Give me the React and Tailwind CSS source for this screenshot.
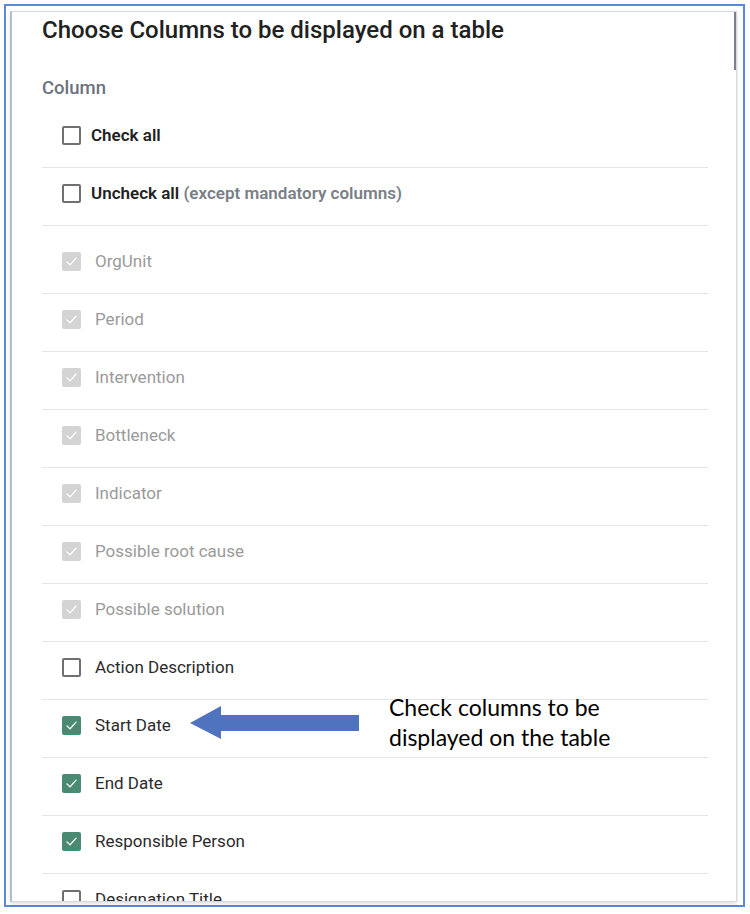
import React from 'react';

const columns = [
  { label: 'OrgUnit', state: 'locked' },
  { label: 'Period', state: 'locked' },
  { label: 'Intervention', state: 'locked' },
  { label: 'Bottleneck', state: 'locked' },
  { label: 'Indicator', state: 'locked' },
  { label: 'Possible root cause', state: 'locked' },
  { label: 'Possible solution', state: 'locked' },
  { label: 'Action Description', state: 'off' },
  { label: 'Start Date', state: 'on', note: true },
  { label: 'End Date', state: 'on' },
  { label: 'Responsible Person', state: 'on' },
  { label: 'Designation Title', state: 'off' },
];

const Tick = () => (
  <svg viewBox="0 0 20 20" className="w-[15px] h-[15px]" fill="none">
    <path d="M4 10.5l4 4 8-9" stroke="white" strokeWidth="1.8" strokeLinecap="round" strokeLinejoin="round" />
  </svg>
);

const Box = ({ state }) => {
  if (state === 'off') {
    return <span className="w-[19px] h-[19px] shrink-0 rounded-[2px] border-2 border-[#707070] bg-white" />;
  }
  return (
    <span
      className={`w-[19px] h-[19px] shrink-0 rounded-[2px] flex items-center justify-center ${
        state === 'on' ? 'bg-[#4a8a73]' : 'bg-[#d4d4d4]'
      }`}
    >
      <Tick />
    </span>
  );
};

// annotation laid over the list
const Callout = () => (
  <div className="absolute left-[147px] top-[-8px] flex items-start pointer-events-none">
    <svg width="170" height="40" viewBox="0 0 170 40" className="mt-[13px]">
      <polygon points="1,18 32,1 32,10 170,10 170,26 32,26 32,34" fill="#4f73bf" />
    </svg>
    <div
      className="ml-[30px] text-[23px] leading-[30px] text-black"
      style={{ fontFamily: 'Lato, "Open Sans", sans-serif' }}
    >
      <div>Check columns to be</div>
      <div>displayed on the table</div>
    </div>
  </div>
);

export default function App() {
  return (
    <div className="w-[750px] h-[914px] bg-white pt-[4px] pl-[4px]" style={{ fontFamily: 'Roboto, "Liberation Sans", sans-serif' }}>
      <div className="w-[741px] h-[903px] border-2 border-[#5b87de] pt-[5px] pl-[4px] pr-[6px] pb-[3px]">
        <div className="relative h-full overflow-hidden bg-white border border-[#d3d9e4] border-l-2 border-l-[#b6bdca] shadow-[0_2px_4px_rgba(0,0,0,0.12)]">
          <div className="absolute right-0 top-0 w-[2px] h-[58px] bg-[#7b8190]" />
          <div className="pl-[30px] pt-[4px] pr-[28px]">
            <h1 className="text-[24px] leading-[28px] font-medium text-[#212121]">
              Choose Columns to be displayed on a table
            </h1>
            <div className="mt-[32px] text-[18.5px] leading-[24px] font-medium text-[#6c727d]">Column</div>

            <div className="mt-[10px]">
              <div className="h-[58px] flex items-center gap-[10px] pl-[20px] pb-[6px] border-b border-[#e4e4e4]">
                <Box state="off" />
                <span className="text-[17px] font-semibold text-[#222]">Check all</span>
              </div>
              <div className="h-[58px] flex items-center gap-[10px] pl-[20px] pb-[6px] border-b border-[#e4e4e4]">
                <Box state="off" />
                <span className="text-[17px] font-semibold text-[#222]">
                  Uncheck all <span className="text-[#7a7f87]">(except mandatory columns)</span>
                </span>
              </div>

              <div className="mt-[10px]">
                {columns.map((c) => (
                  <div
                    key={c.label}
                    className="relative h-[58px] flex items-center gap-[14px] pl-[20px] pb-[6px] border-b border-[#e4e4e4]"
                  >
                    <Box state={c.state} />
                    <span className={`text-[17px] ${c.state === 'locked' ? 'text-[#9a9a9a]' : 'text-[#2b2b2b]'}`}>
                      {c.label}
                    </span>
                    {c.note && <Callout />}
                  </div>
                ))}
              </div>
            </div>
          </div>
        </div>
      </div>
    </div>
  );
}
